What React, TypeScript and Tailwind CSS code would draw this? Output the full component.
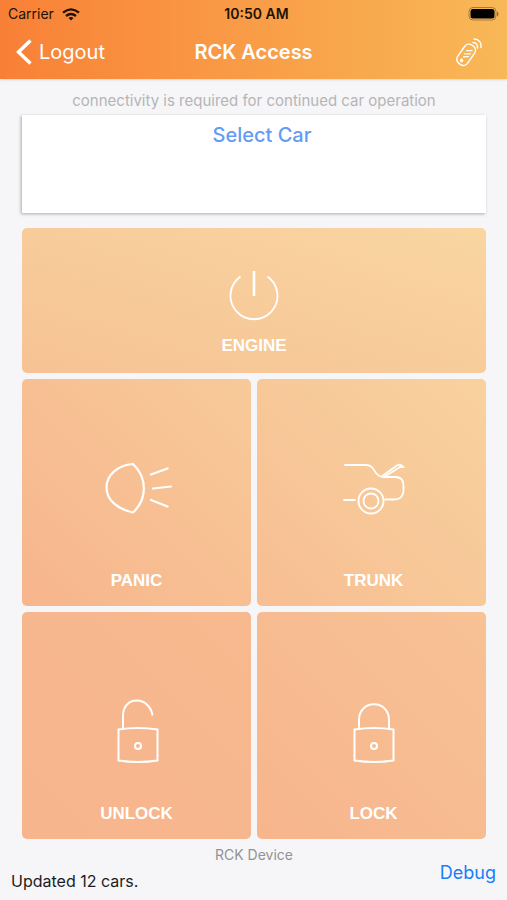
import type { ReactNode } from "react";

function PowerIcon() {
  return (
    <svg width="54" height="54" viewBox="0 0 54 54" fill="none" stroke="currentColor" strokeWidth="1.8" aria-hidden="true">
      <path d="M13.500 8.500A23.500 23.500 0 1 0 40.500 8.500" />
      <path d="M27 3v25" strokeWidth="2.600" />
    </svg>
  );
}

function HeadlightIcon() {
  return (
    <svg width="68" height="54" viewBox="0 0 68 54" fill="none" stroke="currentColor" strokeWidth="2.200" strokeLinecap="round" strokeLinejoin="round" aria-hidden="true">
      <path d="M29 3C14 4 2.500 14 2.500 26.500C2.500 40 15 48.500 29 51.500C43.500 38 43.500 17 29 3Z" />
      <path d="M47 13.500L63.500 7.500M49 27.500L67 25.500M47 39L63.500 45.500" />
    </svg>
  );
}

function TrunkIcon() {
  return (
    <svg width="62" height="54" viewBox="0 0 62 54" fill="none" stroke="currentColor" strokeWidth="1.8" strokeLinecap="round" strokeLinejoin="round" aria-hidden="true">
      <path d="M2 4H23C33 4 30 15.500 40 16H52C58 16 60.500 19 60.500 24V30C60 36 57 38.500 51 38.500H42M1 39H12" />
      <path d="M38.500 15.500L54 4.500Q57 2.500 60.500 6L57 6L42 15.500" />
      <circle cx="28" cy="40" r="12.500" />
      <circle cx="28" cy="40" r="7.500" />
    </svg>
  );
}

function PadlockIcon({ open = false }: { open?: boolean }) {
  return (
    <svg width="44" height="66" viewBox="0 0 44 66" fill="none" stroke="currentColor" strokeWidth="2" aria-hidden="true">
      {open ? (
        <path d="M7 31V18C7 -3 34 -2 36.500 17.500" />
      ) : (
        <path d="M7 31V22C7 1 37 1 37 22V31" />
      )}
      <path d="M2.500 31.500Q22 28.500 41.500 31.500V62.500Q22 65.500 2.500 62.500Z" />
      <circle cx="22" cy="48" r="3" />
    </svg>
  );
}

function RemoteIcon() {
  return (
    <svg width="28" height="30" viewBox="0 0 28 30" fill="none" stroke="currentColor" strokeWidth="1.400" strokeLinecap="round" aria-hidden="true">
      <g transform="rotate(35 11 18)">
        <rect x="5" y="6.500" width="12" height="22.500" rx="5" />
        <path d="M13.500 11L9 14M14 14.500L9 18M14 18L10 21" strokeWidth="1.200" />
        <circle cx="10.500" cy="25" r="1.100" fill="currentColor" />
      </g>
      <path d="M18 5.500C21 5.500 23 8 22.500 11M19 2C24 2 27 6 26 10.500" />
    </svg>
  );
}

function ControlButton({ label, className, children }: { label: string; className: string; children: ReactNode }) {
  return (
    <button type="button" className={`flex flex-col items-center rounded-[5px] text-white ${className}`}>
      {children}
      <span className="font-['Liberation_Sans',sans-serif] text-[17px] leading-5 font-bold">{label}</span>
    </button>
  );
}

export default function App() {
  return (
    <div className="flex min-h-screen flex-col bg-[#f6f6f8] font-['Inter',sans-serif]">
      <header className="bg-linear-to-r from-[#f88036] to-[#f8b858] pb-[3px] shadow-sm">
        <div className="grid h-7 grid-cols-3 items-center px-2 text-[#201208]">
          <div className="flex items-center gap-2">
            <span className="text-sm">Carrier</span>
            <svg width="18" height="13" viewBox="0 0 18 13" fill="none" stroke="currentColor" strokeWidth="2.300" role="img" aria-label="Wi-Fi">
              <path d="M1 4.700Q9 -2 17 4.700M4 8Q9 4 14 8" />
              <path d="M6.500 10Q9 8 11.500 10L9 12.500Z" fill="currentColor" stroke="none" />
            </svg>
          </div>
          <time className="pl-1.5 text-center text-sm font-semibold whitespace-nowrap">10:50 AM</time>
          <svg className="justify-self-end" width="31" height="15" viewBox="0 0 31 15" role="img" aria-label="Battery full">
            <rect x="1" y="0.500" width="27" height="12.500" rx="4" fill="none" stroke="#a87a3c" />
            <rect x="2.500" y="2" width="24" height="9.500" rx="2.500" fill="#000" />
            <path d="M29 4.500Q32 7 29 9.500Z" fill="#8c6632" />
          </svg>
        </div>
        <nav className="grid h-12 grid-cols-3 items-center px-4 text-white">
          <button type="button" className="flex items-center gap-[7px] text-xl">
            <svg width="16" height="26" viewBox="0 0 16 26" fill="none" stroke="currentColor" strokeWidth="3.500" aria-hidden="true">
              <path d="M14.500 1.500L2.500 13L14.500 24.500" />
            </svg>
            Logout
          </button>
          <h1 className="text-center text-xl font-semibold whitespace-nowrap">RCK Access</h1>
          <button type="button" aria-label="Remote" className="justify-self-end pr-2">
            <RemoteIcon />
          </button>
        </nav>
      </header>

      <main className="flex flex-col pt-3 pr-[21px] pl-[22px]">
        <p className="text-center text-[15px] leading-5 text-[#b5b5b7]">connectivity is required for continued car operation</p>
        <button type="button" className="mt-1 flex h-[98px] items-start justify-center bg-white pt-1.5 pl-4 text-xl font-medium text-[#639bf5] shadow-[-1px_1px_3px_#aaa]">
          Select Car
        </button>

        <section aria-label="Car controls" className="mt-[15px] grid grid-cols-2 gap-1.5">
          <ControlButton label="ENGINE" className="col-span-2 h-[145px] gap-3.5 bg-linear-to-tr from-[#f6c294] to-[#f9d6a1] pt-10">
            <PowerIcon />
          </ControlButton>
          <ControlButton label="PANIC" className="h-[227px] gap-14 bg-linear-to-tr from-[#f7b58d] to-[#f7ca99] pt-[82px]">
            <span className="pl-0.5">
              <HeadlightIcon />
            </span>
          </ControlButton>
          <ControlButton label="TRUNK" className="h-[227px] gap-14 bg-linear-to-tr from-[#f7be93] to-[#f8d29e] pt-[82px] pl-1">
            <TrunkIcon />
          </ControlButton>
          <ControlButton label="UNLOCK" className="h-[227px] gap-10 bg-linear-to-tr from-[#f7b58d] to-[#f7b98f] pt-[86px]">
            <span className="pl-0.5">
              <PadlockIcon open />
            </span>
          </ControlButton>
          <ControlButton label="LOCK" className="h-[227px] gap-10 bg-linear-to-tr from-[#f7b58d] to-[#f7c295] pt-[86px] pl-1">
            <PadlockIcon />
          </ControlButton>
        </section>
        <p className="mt-1.5 text-center text-sm text-[#929294]">RCK Device</p>
      </main>

      <footer className="flex items-start justify-between px-[11px]">
        <p className="pt-1.5 text-base leading-5 text-[#1c1c1e]">Updated 12 cars.</p>
        <button type="button" className="text-lg leading-4 text-[#157efb]">Debug</button>
      </footer>
    </div>
  );
}
